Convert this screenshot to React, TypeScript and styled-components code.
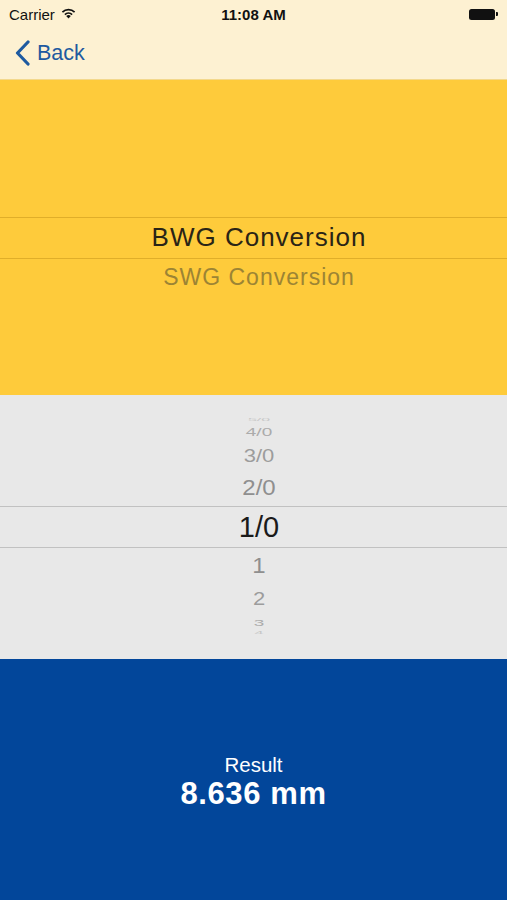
import styled, { createGlobalStyle } from 'styled-components';

const GlobalStyle = createGlobalStyle`
  html, body {
    margin: 0;
    padding: 0;
    font-family: "Liberation Sans", Arial, sans-serif;
  }
  #root {
    height: 900px;
  }
`;

interface WheelItem {
  label: string;
  size: number;
  squash: number;
  color: string;
  slot: number;
}

// rows above the selection band are listed from the band outwards
const gaugeAbove: WheelItem[] = [
  { label: '2/0', size: 24, squash: 0.92, color: '#8f8f8f', slot: 36 },
  { label: '3/0', size: 22, squash: 0.8, color: '#9c9c9c', slot: 29 },
  { label: '4/0', size: 19, squash: 0.55, color: '#ababab', slot: 18 },
  { label: '5/0', size: 16, squash: 0.22, color: '#c6c6c6', slot: 6 },
];

const gaugeBelow: WheelItem[] = [
  { label: '1', size: 24, squash: 0.92, color: '#8f8f8f', slot: 36 },
  { label: '2', size: 22, squash: 0.8, color: '#9c9c9c', slot: 30 },
  { label: '3', size: 19, squash: 0.5, color: '#ababab', slot: 16 },
  { label: '4', size: 16, squash: 0.22, color: '#c6c6c6', slot: 6 },
];

function App(): JSX.Element {
  return (
    <Screen>
      <GlobalStyle />
      <Header>
        <StatusBar>
          <Carrier>
            Carrier
            <svg width="17" height="12" viewBox="0 0 17 12">
              <path d="M8.5 11.5 L6.2 9 A3.3 3.3 0 0 1 10.8 9 Z" fill="#111" />
              <path d="M4.3 7 A6 6 0 0 1 12.7 7 L11.5 8.2 A4.3 4.3 0 0 0 5.5 8.2 Z" fill="#111" />
              <path d="M1.8 4.5 A9.6 9.6 0 0 1 15.2 4.5 L14 5.7 A7.9 7.9 0 0 0 3 5.7 Z" fill="#111" />
            </svg>
          </Carrier>
          <Clock>11:08 AM</Clock>
          <Battery>
            <BatteryBody />
            <BatteryTip />
          </Battery>
        </StatusBar>
        <NavBar>
          <BackButton>
            <svg width="17" height="26" viewBox="0 0 17 26">
              <path d="M14 2 L3.5 13 L14 24" fill="none" stroke="#1e5aa0" strokeWidth="3.2" strokeLinecap="round" strokeLinejoin="round" />
            </svg>
            Back
          </BackButton>
        </NavBar>
      </Header>

      <ModePicker>
        <AboveBand />
        <SelectionBand $line="rgba(170,120,10,0.35)">
          <ModeSelected>BWG Conversion</ModeSelected>
        </SelectionBand>
        <BelowBand>
          <WheelRow $slot={38}>
            <ModeOption>SWG Conversion</ModeOption>
          </WheelRow>
        </BelowBand>
      </ModePicker>

      <GaugePicker>
        <AboveBand>
          {gaugeAbove.map((item) => (
            <WheelRow key={item.label} $slot={item.slot}>
              <WheelLabel $size={item.size} $squash={item.squash} $color={item.color}>
                {item.label}
              </WheelLabel>
            </WheelRow>
          ))}
        </AboveBand>
        <SelectionBand $line="rgba(0,0,0,0.17)">
          <GaugeSelected>1/0</GaugeSelected>
        </SelectionBand>
        <BelowBand>
          {gaugeBelow.map((item) => (
            <WheelRow key={item.label} $slot={item.slot}>
              <WheelLabel $size={item.size} $squash={item.squash} $color={item.color}>
                {item.label}
              </WheelLabel>
            </WheelRow>
          ))}
        </BelowBand>
      </GaugePicker>

      <ResultPanel>
        <ResultCaption>Result</ResultCaption>
        <ResultValue>8.636 mm</ResultValue>
      </ResultPanel>
    </Screen>
  );
}

const Screen = styled.div`
  width: 507px;
  height: 900px;
  display: flex;
  flex-direction: column;
  overflow: hidden;
`;

const Header = styled.div`
  height: 80px;
  background: #fdf1d2;
  border-bottom: 1px solid #f3d88c;
  box-sizing: border-box;
  display: flex;
  flex-direction: column;
`;

const StatusBar = styled.div`
  height: 28px;
  display: grid;
  grid-template-columns: 1fr auto 1fr;
  align-items: center;
  padding: 0 9px;
  font-size: 15px;
  color: #111;
`;

const Carrier = styled.div`
  display: flex;
  align-items: center;
  gap: 5px;
  svg {
    margin-top: -2px;
  }
`;

const Clock = styled.div`
  font-weight: bold;
  font-size: 15px;
`;

const Battery = styled.div`
  justify-self: end;
  display: flex;
  align-items: center;
`;

const BatteryBody = styled.div`
  width: 26px;
  height: 11px;
  background: #111;
  border-radius: 2.5px;
`;

const BatteryTip = styled.div`
  width: 2px;
  height: 4px;
  background: #111;
  border-radius: 0 1px 1px 0;
  margin-left: 1px;
`;

const NavBar = styled.div`
  flex: 1;
  display: flex;
  align-items: center;
  padding: 0 0 1px 14px;
`;

const BackButton = styled.div`
  display: flex;
  align-items: center;
  gap: 6px;
  color: #1e5aa0;
  font-size: 21.5px;
`;

const Picker = styled.div`
  display: grid;
  grid-template-rows: 1fr 42px 1fr;
  overflow: hidden;
  padding-left: 11px;
  box-sizing: border-box;
`;

const ModePicker = styled(Picker)`
  height: 315px;
  background: #fecb3b;
`;

const GaugePicker = styled(Picker)`
  height: 264px;
  background: #e8e8e8;
`;

const AboveBand = styled.div`
  display: flex;
  flex-direction: column-reverse;
  justify-content: flex-start;
  min-height: 0;
`;

const BelowBand = styled.div`
  display: flex;
  flex-direction: column;
  min-height: 0;
`;

const WheelRow = styled.div<{ $slot: number }>`
  height: ${(p) => p.$slot}px;
  flex-shrink: 0;
  display: flex;
  align-items: center;
  justify-content: center;
`;

const WheelLabel = styled.div<{ $size: number; $squash: number; $color: string }>`
  font-size: ${(p) => p.$size}px;
  line-height: 1;
  color: ${(p) => p.$color};
  transform: scaleY(${(p) => p.$squash});
`;

const SelectionBand = styled.div<{ $line: string }>`
  margin-left: -11px;
  padding-left: 11px;
  border-top: 1px solid ${(p) => p.$line};
  border-bottom: 1px solid ${(p) => p.$line};
  display: flex;
  align-items: center;
  justify-content: center;
`;

const ModeSelected = styled.div`
  font-size: 26px;
  letter-spacing: 1px;
  color: #2a2416;
`;

const ModeOption = styled.div`
  font-size: 23px;
  letter-spacing: 1px;
  color: #9c8434;
`;

const GaugeSelected = styled.div`
  font-size: 29px;
  color: #1a1a1a;
`;

const ResultPanel = styled.div`
  flex: 1;
  background: #02469a;
  color: #fff;
  display: flex;
  flex-direction: column;
  align-items: center;
  justify-content: center;
  padding-top: 5px;
`;

const ResultCaption = styled.div`
  font-size: 20.5px;
`;

const ResultValue = styled.div`
  font-size: 31px;
  font-weight: bold;
  letter-spacing: 0.6px;
  margin-top: -1px;
`;

export default App;
